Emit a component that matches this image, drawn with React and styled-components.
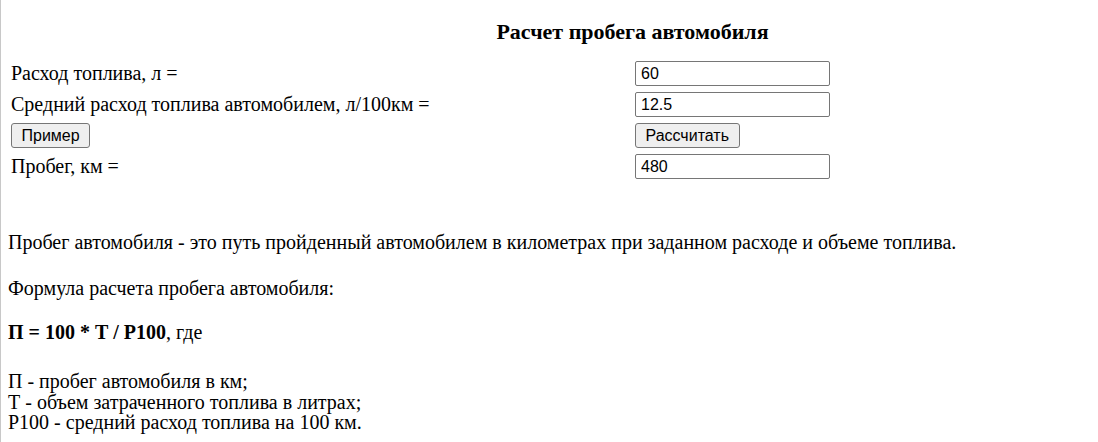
import React from 'react'
import styled, { createGlobalStyle } from 'styled-components'

const GlobalStyle = createGlobalStyle`
  html, body {
    margin: 0;
    padding: 0;
    background: #fff;
  }
  body {
    font-family: "Liberation Serif", "Times New Roman", serif;
    font-size: 20px;
    color: #000;
  }
`

const Page = styled.div`
  min-height: 100vh;
  box-sizing: border-box;
  border-left: 1px solid #c8c8c8;
  padding-top: 19px;
`

const Title = styled.h3`
  margin: 0;
  padding-left: 166px;
  font-size: 22px;
  line-height: 26px;
  font-weight: bold;
  text-align: center;
`

const Form = styled.div`
  display: grid;
  grid-template-columns: 624px 195px;
  grid-auto-rows: 25px;
  row-gap: 6px;
  margin: 16px 0 0 10px;
`

const Label = styled.div`
  line-height: 25px;
  white-space: nowrap;
`

const Field = styled.input`
  box-sizing: border-box;
  width: 195px;
  height: 25px;
  margin: 0;
  padding: 1px 5px;
  font-family: "Liberation Sans", Arial, sans-serif;
  font-size: 16px;
  color: #000;
  border: 1px solid #767676;
  border-radius: 2px;
  background: #fff;
`

const Button = styled.button`
  justify-self: start;
  box-sizing: border-box;
  height: 25px;
  margin: 0;
  padding: 0 9.5px;
  font-family: "Liberation Sans", Arial, sans-serif;
  font-size: 16px;
  color: #000;
  background: #efefef;
  border: 1px solid #767676;
  border-radius: 3px;
`

const Text = styled.div`
  margin: 52px 0 0 7px;
`

const Paragraph = styled.p`
  margin: 0 0 ${p => p.$after}px;
  line-height: 22px;
`

const List = styled.p`
  margin: 0;
  line-height: 20.5px;
`

export default function App() {
  return (
    <Page>
      <GlobalStyle />
      <Title>Расчет пробега автомобиля</Title>
      <Form>
        <Label>Расход топлива, л =</Label>
        <Field defaultValue="60" />
        <Label>Средний расход топлива автомобилем, л/100км =</Label>
        <Field defaultValue="12.5" />
        <Button>Пример</Button>
        <Button>Рассчитать</Button>
        <Label>Пробег, км =</Label>
        <Field defaultValue="480" />
      </Form>
      <Text>
        <Paragraph $after={24}>
          Пробег автомобиля - это путь пройденный автомобилем в километрах при заданном расходе и объеме топлива.
        </Paragraph>
        <Paragraph $after={22}>Формула расчета пробега автомобиля:</Paragraph>
        <Paragraph $after={28}>
          <b>П = 100 * Т / Р100</b>, где
        </Paragraph>
        <List>
          П - пробег автомобиля в км;
          <br />
          Т - объем затраченного топлива в литрах;
          <br />
          Р100 - средний расход топлива на 100 км.
        </List>
      </Text>
    </Page>
  )
}
